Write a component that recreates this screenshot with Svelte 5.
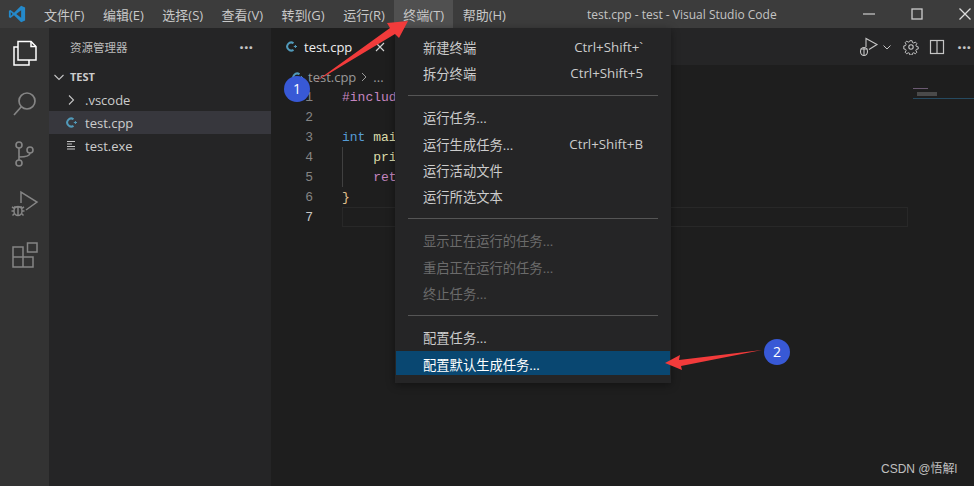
<script>
	const menus = ["文件(F)", "编辑(E)", "选择(S)", "查看(V)", "转到(G)", "运行(R)", "终端(T)", "帮助(H)"];

	const groups = [
		[
			{ label: "新建终端", key: "Ctrl+Shift+`" },
			{ label: "拆分终端", key: "Ctrl+Shift+5" },
		],
		[
			{ label: "运行任务..." },
			{ label: "运行生成任务...", key: "Ctrl+Shift+B" },
			{ label: "运行活动文件" },
			{ label: "运行所选文本" },
		],
		[
			{ label: "显示正在运行的任务...", off: true },
			{ label: "重启正在运行的任务...", off: true },
			{ label: "终止任务...", off: true },
		],
		[{ label: "配置任务..." }, { label: "配置默认生成任务...", on: true }],
	];

	const lineNumbers = [1, 2, 3, 4, 5, 6, 7];
</script>

<div class="window">
	<header class="titlebar">
		<svg class="logo" width="18" height="18" viewBox="0 0 24 24">
			<path fill="#2489ca" d="M17.5 1 8 10.2 3.4 6.600 1.200 7.700v8.600l2.200 1.100L8 13.800 17.500 23l5.300-2.300V3.300z" />
			<path fill="#3c3c3c" d="M17.500 7v10l-6.500-5zM3.700 9.200 6.200 12l-2.500 2.800z" />
		</svg>
		<nav class="menubar">
			{#each menus as m, i}
				<span class="menu-title" class:open={i === 6}>{m}</span>
			{/each}
		</nav>
		<div class="title">test.cpp - test - Visual Studio Code</div>
		<div class="controls">
			<svg width="14" height="14" viewBox="0 0 14 14"><path d="M1 7h12" stroke="#ccc" stroke-width="1.200" /></svg>
			<svg width="14" height="14" viewBox="0 0 14 14"><rect x="2" y="2" width="10" height="10" fill="none" stroke="#ccc" stroke-width="1.300" /></svg>
			<svg width="14" height="14" viewBox="0 0 14 14"><path d="M1.500 1.500l11 11M12.500 1.500l-11 11" stroke="#ddd" stroke-width="1.300" /></svg>
		</div>
	</header>

	<div class="body">
		<aside class="activity">
			<svg width="28" height="28" viewBox="0 0 28 28" fill="none" stroke="#fff" stroke-width="1.500">
				<path d="M7 1.500h13l5 5v13.500H7z" />
				<path d="M20 1.500v5h5" />
				<path d="M7 7H3v18h15v-5" />
			</svg>
			<svg width="28" height="28" viewBox="0 0 28 28" fill="none" stroke="#858585" stroke-width="1.700">
				<circle cx="16" cy="11" r="8" />
				<path d="M10.300 16.700 3 25" />
			</svg>
			<svg width="28" height="28" viewBox="0 0 28 28" fill="none" stroke="#858585" stroke-width="1.600">
				<circle cx="8" cy="5" r="3" />
				<circle cx="8" cy="23" r="3" />
				<circle cx="19" cy="10" r="3" />
				<path d="M8 8v12M8 17c6 0 11-1 11-4" />
			</svg>
			<svg width="28" height="28" viewBox="0 0 28 28" fill="none" stroke="#858585" stroke-width="1.500">
				<path d="M10 13V2l16 10-11 8" />
				<ellipse cx="7" cy="21" rx="4" ry="4.500" />
				<path d="M3 17h8M1 17l2.500 1.500M13 17l-2.500 1.500M.5 21H3M13.500 21H11M1.500 25.500l2-2M12.500 25.500l-2-2M7 17v8" />
			</svg>
			<svg width="28" height="28" viewBox="0 0 28 28" fill="none" stroke="#858585" stroke-width="1.500">
				<rect x="16.500" y="3" width="9.500" height="9" />
				<path d="M2 7h10v10h10v10H2zM2 17h10v10" />
			</svg>
		</aside>

		<aside class="sidebar">
			<div class="side-head">
				<span>资源管理器</span>
				<span class="dots">···</span>
			</div>
			<div class="tree">
				<div class="row folder-root">
					<svg class="chev" width="12" height="12" viewBox="0 0 12 12"><path d="M1.500 4 6 8.500 10.500 4" fill="none" stroke="#c5c5c5" stroke-width="1.100" /></svg>
					<b>TEST</b>
				</div>
				<div class="row">
					<svg class="chev sub" width="12" height="12" viewBox="0 0 12 12"><path d="M4 1.500 8.500 6 4 10.500" fill="none" stroke="#c5c5c5" stroke-width="1.100" /></svg>
					<span>.vscode</span>
				</div>
				<div class="row file active">
					<svg class="cpp" width="13" height="13" viewBox="0 0 13 13"><path d="M8.500 3.200A4 4 0 1 0 8.500 9.800" fill="none" stroke="#519aba" stroke-width="2" /><path d="M8.800 6.500h3.200M10.400 5v3" stroke="#519aba" stroke-width="1" /></svg>
					<span>test.cpp</span>
				</div>
				<div class="row file">
					<svg class="cpp" width="13" height="13" viewBox="0 0 13 13"><path d="M2 2.500h8M2 5h5M2 7.500h8M2 10h8" stroke="#c5c5c5" stroke-width="1.100" /></svg>
					<span>test.exe</span>
				</div>
			</div>
		</aside>

		<main class="editor">
			<div class="tabs">
				<div class="tab">
					<svg width="13" height="13" viewBox="0 0 13 13"><path d="M8.500 3.200A4 4 0 1 0 8.500 9.800" fill="none" stroke="#519aba" stroke-width="2" /><path d="M8.800 6.500h3.200M10.400 5v3" stroke="#519aba" stroke-width="1" /></svg>
					<span class="tab-name">test.cpp</span>
					<svg class="tab-x" width="10" height="10" viewBox="0 0 10 10"><path d="M1 1l8 8M9 1L1 9" stroke="#d4d4d4" stroke-width="1.100" /></svg>
				</div>
				<div class="actions">
					<svg width="24" height="24" viewBox="0 0 24 24" fill="none" stroke="#c5c5c5" stroke-width="1.100">
						<path d="M11 12V3.500l11 6-8 5" />
						<ellipse cx="9" cy="16.500" rx="3.500" ry="4" />
						<path d="M5.500 14h7M9 13v8" />
					</svg>
					<svg class="act-chev" width="10" height="10" viewBox="0 0 10 10"><path d="M1.500 3.500 5 7l3.500-3.500" fill="none" stroke="#c5c5c5" stroke-width="1" /></svg>
					<svg class="gear" width="16" height="16" viewBox="0 0 16 16" fill="none" stroke="#c5c5c5" stroke-width="1.100">
						<circle cx="8" cy="8" r="2.200" />
						<path d="M6.800 1h2.400l.4 2 1.500.6 1.700-1.100 1.700 1.700-1.100 1.700.6 1.500 2 .4v2.400l-2 .4-.6 1.500 1.100 1.700-1.700 1.700-1.700-1.100-1.500.6-.4 2H6.800l-.4-2-1.500-.6-1.700 1.100-1.700-1.700 1.100-1.700-.6-1.500-2-.4V6.800l2-.4.6-1.500-1.100-1.700 1.700-1.700 1.700 1.100 1.500-.6z" transform="translate(.8 .8) scale(.9)" />
					</svg>
					<svg class="split" width="16" height="16" viewBox="0 0 16 16" fill="none" stroke="#c5c5c5" stroke-width="1.200"><rect x="1.500" y="1.500" width="13" height="13" /><path d="M8 1.500v13" /></svg>
					<span class="dots">···</span>
				</div>
			</div>
			<div class="crumbs">
				<svg width="13" height="13" viewBox="0 0 13 13"><path d="M8.500 3.200A4 4 0 1 0 8.500 9.800" fill="none" stroke="#519aba" stroke-width="2" /><path d="M8.800 6.500h3.200M10.400 5v3" stroke="#519aba" stroke-width="1" /></svg>
				<span>test.cpp</span>
				<svg width="9" height="10" viewBox="0 0 9 10"><path d="M2 1l4 4-4 4" fill="none" stroke="#999" stroke-width="1" /></svg>
				<span>...</span>
			</div>
			<div class="code-area">
				<div class="gutter">
					{#each lineNumbers as n}
						<div class:current={n === 7}>{n}</div>
					{/each}
				</div>
				<pre class="code"><span class="pp">#includ</span>

<span class="kw">int</span> <span class="fn">mai</span>
    <span class="fn">pri</span>
    <span class="ret">ret</span>
<span class="br">{"}"}</span></pre>
				<div class="guide"></div>
				<div class="cur"></div>
				<div class="minimap">
					<i class="m1"></i>
					<i class="m2"></i>
					<i class="m3"></i>
				</div>
			</div>
		</main>
	</div>

	<div class="dropdown">
		{#each groups as group, g}
			{#if g > 0}<div class="sep"></div>{/if}
			{#each group as item}
				<div class="item" class:off={item.off} class:on={item.on}>
					<span>{item.label}</span>
					{#if item.key}<span class="key">{item.key}</span>{/if}
				</div>
			{/each}
		{/each}
	</div>

	<svg class="marks" width="974" height="486" viewBox="0 0 974 486">
		<path fill="#f23b3b" d="M315 82 390 28 387 23 408 21 399 38 395 34z" />
		<path fill="#f23b3b" d="M762 350 679 360 680 355 665 363 682 370 681 366z" />
		<circle cx="297" cy="89" r="13" fill="#3859d6" />
		<circle cx="777" cy="352" r="13" fill="#3859d6" />
		<text x="297" y="94" class="num">1</text>
		<text x="777" y="357" class="num">2</text>
	</svg>

	<div class="watermark">CSDN @悟解l</div>
</div>

<style>
	:global(body) {
		margin: 0;
		background: #1e1e1e;
	}
	.window {
		position: relative;
		width: 974px;
		height: 486px;
		overflow: hidden;
		display: flex;
		flex-direction: column;
		font-family: "Open Sans", "Noto Sans CJK SC", sans-serif;
		font-size: 13px;
		color: #ccc;
	}

	.titlebar {
		flex: 0 0 28px;
		display: flex;
		align-items: center;
		background: #3c3c3c;
		position: relative;
	}
	.logo {
		margin-left: 8px;
		margin-right: 8.750px;
	}
	.menubar {
		display: flex;
		height: 100%;
	}
	.menu-title {
		display: flex;
		align-items: center;
		padding: 0 9.250px;
		white-space: nowrap;
		font-size: 13px;
		color: #c8c8c8;
	}
	.menu-title.open {
		background: #505050;
	}
	.title {
		position: absolute;
		left: 587px;
		font-size: 12px;
		color: #c4c4c4;
		white-space: nowrap;
	}
	.controls {
		margin-left: auto;
		display: flex;
		gap: 34px;
		margin-right: 2px;
	}

	.body {
		flex: 1;
		display: flex;
		min-height: 0;
	}
	.activity {
		flex: 0 0 49px;
		background: #333;
		display: flex;
		flex-direction: column;
		align-items: center;
		padding-top: 12px;
		gap: 22px;
		box-sizing: border-box;
	}
	.sidebar {
		flex: 0 0 222px;
		background: #252526;
	}
	.side-head {
		display: flex;
		justify-content: space-between;
		align-items: center;
		height: 37px;
		padding: 0 18px 0 21px;
		font-size: 11.500px;
		color: #bbb;
	}
	.dots {
		font-size: 16px;
		font-weight: 700;
		color: #c5c5c5;
	}
	.row {
		display: flex;
		align-items: center;
		height: 23px;
		color: #ccc;
		font-size: 13px;
	}
	.folder-root {
		font-size: 11px;
		padding-left: 4px;
	}
	.folder-root b {
		margin-left: 5px;
	}
	.chev.sub {
		margin-left: 16px;
		margin-right: 8px;
	}
	.file .cpp {
		margin-left: 16px;
		margin-right: 7px;
	}
	.row.active {
		background: #37373d;
	}

	.editor {
		flex: 1;
		background: #1e1e1e;
		display: flex;
		flex-direction: column;
		min-width: 0;
	}
	.tabs {
		flex: 0 0 37px;
		display: flex;
		justify-content: space-between;
		background: #252526;
	}
	.tab {
		width: 125px;
		background: #1e1e1e;
		display: flex;
		align-items: center;
		padding-left: 14px;
		box-sizing: border-box;
		gap: 6px;
	}
	.tab-name {
		color: #eee;
		font-size: 13px;
	}
	.tab-x {
		margin-left: 17px;
	}
	.actions {
		display: flex;
		align-items: center;
		padding-right: 3px;
	}
	.act-chev {
		margin-left: 3px;
	}
	.gear {
		margin-left: 11px;
	}
	.split {
		margin-left: 10px;
		margin-right: 12px;
	}
	.crumbs {
		flex: 0 0 22px;
		display: flex;
		align-items: center;
		gap: 4px;
		padding-left: 20px;
		padding-top: 2px;
		box-sizing: border-box;
		font-size: 13px;
		color: #999;
		background: #1e1e1e;
	}
	.code-area {
		flex: 1;
		display: flex;
		position: relative;
	}
	.gutter {
		width: 42px;
		text-align: right;
		font: 13px/20px "Liberation Mono", monospace;
		color: #858585;
		padding-top: 1px;
	}
	.gutter .current {
		color: #c6c6c6;
	}
	.code {
		margin: 0 0 0 29px;
		padding-top: 1px;
		font: 13px/20px "Liberation Mono", "DejaVu Sans Mono", monospace;
		color: #d4d4d4;
	}
	.guide {
		position: absolute;
		left: 71px;
		top: 60px;
		width: 1px;
		height: 40px;
		background: #404040;
	}
	.cur {
		position: absolute;
		left: 71px;
		top: 120px;
		width: 566px;
		height: 20px;
		box-sizing: border-box;
		border: 1px solid #282828;
	}
	.pp {
		color: #c586c0;
	}
	.kw {
		color: #569cd6;
	}
	.fn {
		color: #dcdcaa;
	}
	.ret {
		color: #c586c0;
	}
	.br {
		color: #e2c08d;
	}
	.minimap {
		position: absolute;
		left: 642px;
		top: 1px;
		width: 61px;
		height: 14px;
	}
	.minimap i {
		position: absolute;
		display: block;
	}
	.m1 {
		left: 0;
		top: 0;
		width: 15px;
		height: 1px;
		background: #6b5a72;
	}
	.m2 {
		left: 4px;
		top: 4px;
		width: 20px;
		height: 4px;
		background: #4a4a4a;
	}
	.m3 {
		left: 0;
		top: 10px;
		width: 61px;
		height: 1px;
		background: #264a60;
	}

	.dropdown {
		position: absolute;
		left: 395px;
		top: 28px;
		width: 276px;
		height: 355px;
		box-sizing: border-box;
		background: #252526;
		box-shadow: 0 2px 8px rgba(0, 0, 0, 0.4);
		padding: 6px 1px 8px;
	}
	.item {
		display: flex;
		justify-content: space-between;
		align-items: center;
		height: 26.300px;
		padding: 0 27px;
		font-size: 13.300px;
		color: #ccc;
		white-space: nowrap;
	}
	.item.off {
		color: #6b6b6b;
	}
	.item.on {
		box-sizing: border-box;
		height: 24px;
		padding-top: 4px;
		background: #094771;
		color: #fff;
	}
	.sep {
		height: 1px;
		background: #555;
		margin: 8.500px 12px;
	}
	.marks {
		position: absolute;
		left: 0;
		top: 0;
		pointer-events: none;
	}
	.num {
		fill: #fff;
		font: 14px "Open Sans", sans-serif;
		text-anchor: middle;
	}
	.watermark {
		position: absolute;
		left: 881px;
		top: 462px;
		font: 12px/14px "Liberation Sans", "Noto Sans CJK SC", sans-serif;
		color: #c0c0c0;
		white-space: nowrap;
	}
</style>
